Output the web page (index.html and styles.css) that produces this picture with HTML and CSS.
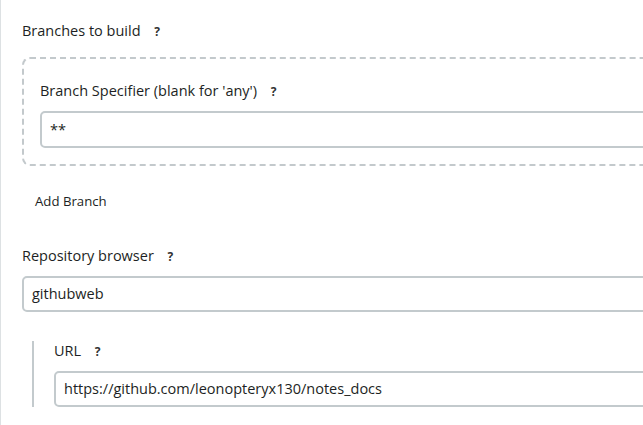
FILE: index.html
```html
<!DOCTYPE html>
<html>
<head>
<meta charset="utf-8">
<link rel="stylesheet" href="styles.css">
</head>
<body>
<div class="page">
  <div class="label top">Branches to build <span class="help">?</span></div>
  <div class="repeat">
    <div class="label">Branch Specifier (blank for 'any') <span class="help">?</span></div>
    <div class="input">**</div>
  </div>
  <div class="add">Add Branch</div>
  <div class="label">Repository browser <span class="help">?</span></div>
  <div class="input">githubweb</div>
  <div class="nested">
    <div class="label">URL <span class="help">?</span></div>
    <div class="input">https://github.com/leonopteryx130/notes_docs</div>
  </div>
</div>
</body>
</html>
```
FILE: styles.css
```css
html, body { margin: 0; padding: 0; background: #fff; }
body { overflow: hidden; width: 643px; height: 425px; }
.page {
  border-left: 1px solid #dde1e3;
  height: 425px;
  box-sizing: border-box;
  padding: 21px 0 0 21px;
  margin-right: -40px;
  font-family: "Segoe UI", "Open Sans", "Noto Sans", sans-serif;
  font-size: 14.5px;
  color: #1d1f24;
}
.label { line-height: 20px; height: 20px; }
.help { font-weight: bold; font-size: 12px; margin-left: 10px; color: #333; }
.repeat {
  margin-top: 16px;
  border: 2px dashed #c3c9cc;
  border-radius: 8px;
  padding: 22px 0 16px 16px;
}
.repeat .input { margin-top: 10px; height: 33px; line-height: 33px; }
.input {
  height: 32px;
  border: 2px solid #c3cacd;
  border-radius: 5px;
  padding-left: 8px;
  line-height: 32px;
  margin-top: 10px;
}
.add { font-size: 13.2px; margin: 25px 0 0 13px; line-height: 20px; height: 20px; margin-bottom: 35px; }
.nested {
  margin: 29px 0 0 10px;
  border-left: 2px solid #c3cacd;
  padding-left: 20px;
}
.nested .input { margin-top: 10px; }
```
